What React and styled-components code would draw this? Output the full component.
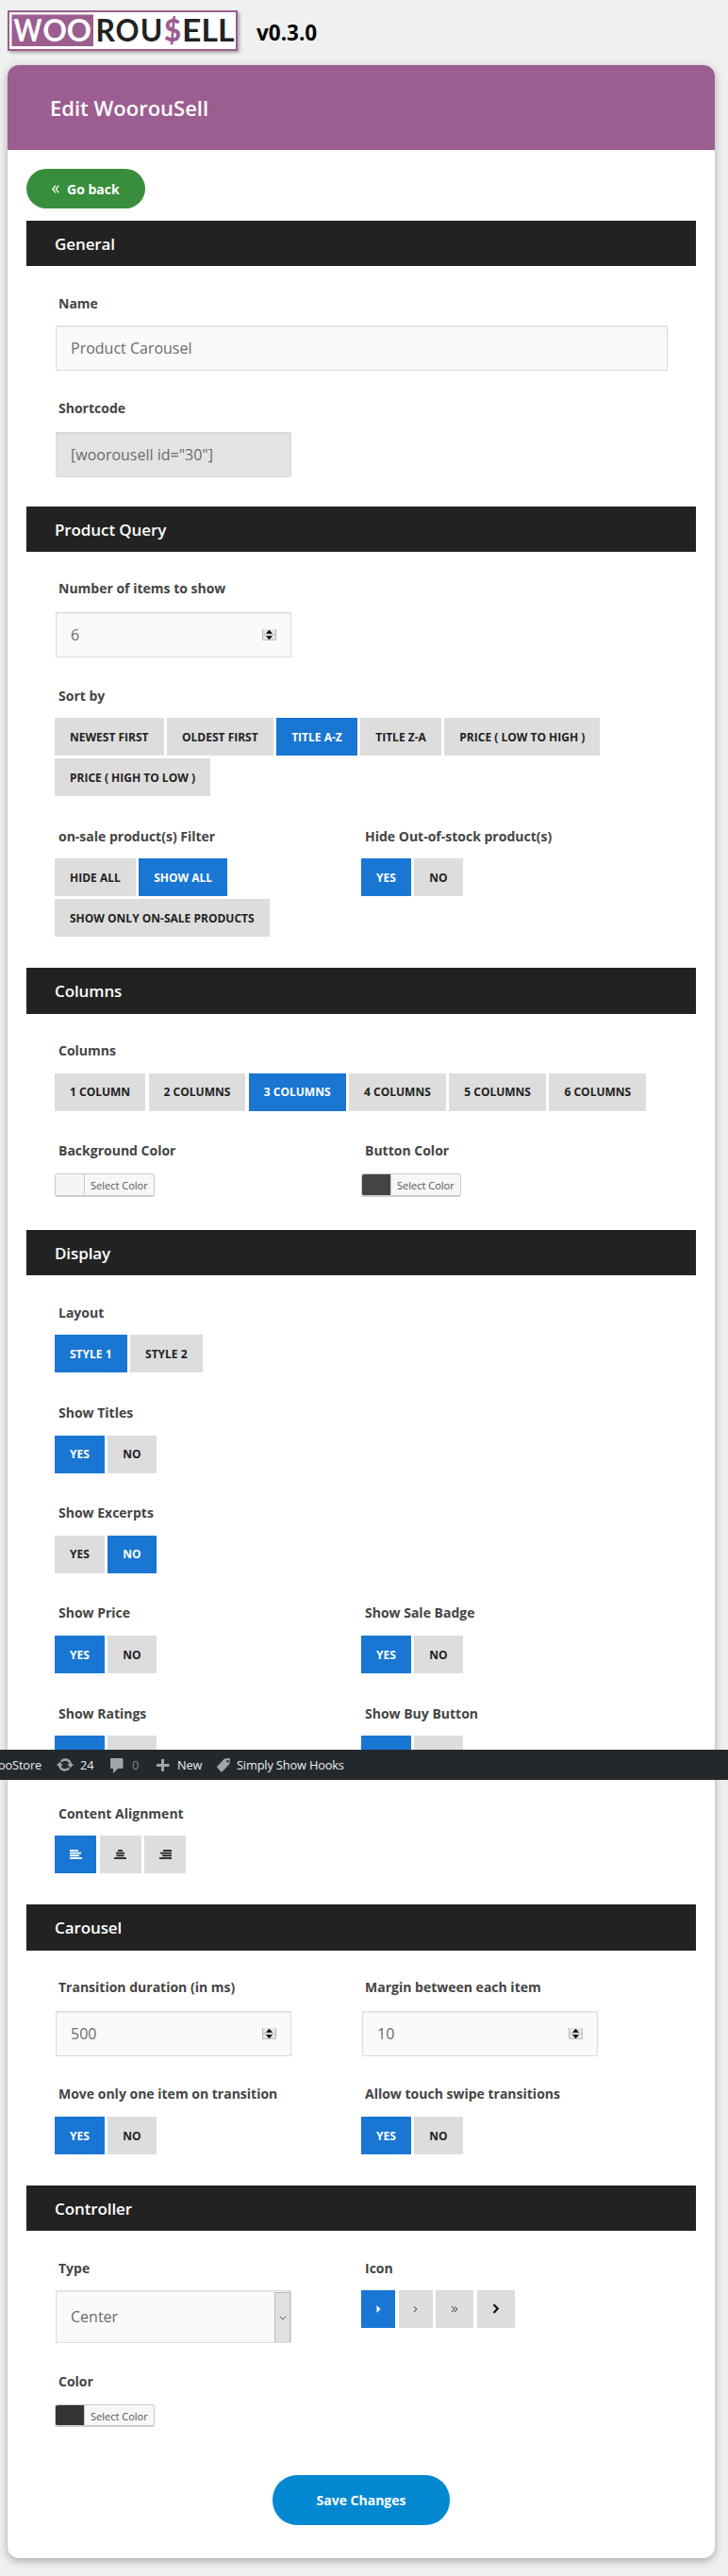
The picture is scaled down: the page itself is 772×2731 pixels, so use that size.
import React from "react";
import styled, { createGlobalStyle } from "styled-components";

const Global = createGlobalStyle`
  *, *::before, *::after { box-sizing: border-box; }
  body { margin: 0; background: #f0f0f0; font-family: "Open Sans", sans-serif; color: #444; }
`;

const Page = styled.div`
  position: relative;
  height: 2731px;
  padding: 11px 14px 0 8px;
  overflow: hidden;
`;

const Brand = styled.header`
  display: flex;
  height: 58px;
`;

const LogoBox = styled.div`
  width: 244px;
  height: 43px;
  border: 2px solid #9c5d90;
  background: #fff;
  box-shadow: 2px 2px 3px rgba(0, 0, 0, 0.3);
  svg { display: block; }
`;

const Version = styled.div`
  margin: 8px 0 0 20px;
  font-size: 22.5px;
  line-height: 32px;
  font-weight: 700;
  color: #000;
`;

const Card = styled.main`
  height: 2643px;
  border-radius: 12px;
  background: #fff;
  box-shadow: 0 3px 10px rgba(0, 0, 0, 0.3);
`;

const CardTitle = styled.h1`
  margin: 0;
  height: 90px;
  padding-left: 45px;
  border-radius: 12px 12px 0 0;
  background: #9c5d90;
  color: #fff;
  font-size: 22px;
  font-weight: 600;
  line-height: 91px;
`;

const CardBody = styled.div`
  padding: 20px 20px 0;
`;

const BackButton = styled.button`
  display: flex;
  align-items: center;
  width: 126px;
  height: 42px;
  margin: 0 0 13px;
  padding: 0 0 0 27px;
  border: 0;
  border-radius: 21px;
  background: #388e3c;
  color: #fff;
  font: 700 14px "Open Sans", sans-serif;
  svg { margin-right: 8px; }
`;

const SectionTitle = styled.h2`
  margin: 0;
  height: ${(p) => p.$h || 48}px;
  padding-left: 30px;
  background: #222;
  color: #fff;
  font-size: 17px;
  font-weight: 600;
  line-height: 50px;
  letter-spacing: -0.1px;
`;

const SectionBody = styled.div`
  padding: 0 30px ${(p) => p.$bottom}px;
`;

const Row = styled.div`
  display: grid;
  grid-template-columns: ${(p) => (p.$wide ? "1fr" : "325px 325px")};
  align-items: start;
  padding-top: ${(p) => p.$top}px;
`;

const FieldBox = styled.div`
  display: flex;
  flex-direction: column;
  align-items: flex-start;
  gap: ${(p) => p.$gap}px;
`;

const Label = styled.label`
  padding-left: 4px;
  font-size: 14px;
  font-weight: 700;
  line-height: 20px;
  color: #444;
  white-space: nowrap;
`;

const Input = styled.div`
  display: flex;
  align-items: center;
  justify-content: space-between;
  width: ${(p) => (p.$full ? 649 : 250)}px;
  height: ${(p) => p.$h || 48}px;
  margin-left: 1px;
  padding: 0 ${(p) => (p.$select ? 0 : 15)}px 0 15px;
  border: 1px solid #ddd;
  background: ${(p) => (p.$readonly ? "#e4e4e4" : "#fafafa")};
  box-shadow: inset 0 1px 2px rgba(0, 0, 0, 0.07);
  color: #6b6b6b;
  font-size: 16px;
`;

const SelectArrow = styled.span`
  display: flex;
  align-items: center;
  justify-content: center;
  align-self: stretch;
  width: 17px;
  margin-top: 1px;
  border: 1px solid #bbb;
  border-bottom: 0;
  background: #e1e1e1;
`;

const Options = styled.div`
  display: flex;
  flex-wrap: wrap;
  gap: 3px 3.5px;
  max-width: ${(p) => p.$max || 600}px;
`;

const Option = styled.button`
  display: flex;
  align-items: center;
  justify-content: center;
  height: 40px;
  min-width: ${(p) => p.$w || 0}px;
  padding: ${(p) => (p.$w ? "0" : p.$raised ? "0 16px 2px" : "0 16px")};
  border: 0;
  background: ${(p) => (p.$on ? "#1976d2" : "#ddd")};
  color: ${(p) => (p.$on ? "#fff" : "#222")};
  font: 700 12px "Open Sans", sans-serif;
  text-transform: uppercase;
  white-space: nowrap;
`;

const Picker = styled.button`
  display: flex;
  width: 106px;
  height: ${(p) => p.$h || 25}px;
  padding: 0;
  border: 1px solid #ccc;
  border-bottom-width: 2px;
  border-radius: 3px;
  overflow: hidden;
  background: #f7f7f7;
  color: #555;
  font: 11px/24px "Open Sans", sans-serif;
`;

const Swatch = styled.span`
  width: 31px;
  height: 100%;
  margin-right: 6px;
  border-right: 1px solid #ccc;
  background: ${(p) => p.$color};
`;

const SaveButton = styled.button`
  display: block;
  width: 188px;
  height: 53px;
  margin: 0 auto;
  border: 0;
  border-radius: 26px;
  background: #0288d1;
  color: #fff;
  font: 700 14px "Open Sans", sans-serif;
`;

const AdminBar = styled.nav`
  position: absolute;
  left: 0;
  top: 1855px;
  display: flex;
  align-items: center;
  width: 100%;
  height: 32px;
  background: #23282d;
  color: #eee;
  font-size: 12.8px;
  line-height: 33px;
  letter-spacing: -0.15px;
  white-space: nowrap;
`;

const SiteName = styled.span`
  display: flex;
  justify-content: flex-end;
  width: 44px;
  margin-right: 15px;
`;

const AdminItem = styled.span`
  display: flex;
  align-items: center;
  width: ${(p) => p.$w}px;
  color: ${(p) => (p.$dim ? "#84888c" : "#eee")};
  svg { flex: none; width: 20px; height: 20px; margin-right: ${(p) => p.$gap}px; fill: #a0a5aa; }
`;

/* Each glyph: text, left edge, advance width, colour */
const LOGO_LETTERS = [
  ["W", 4.5, 30, "#fff"],
  ["O", 35.2, 25.6, "#fff"],
  ["O", 60.8, 26.2, "#fff"],
  ["R", 91.5, 20.5, "#222"],
  ["O", 112.6, 25, "#222"],
  ["U", 138.7, 23.6, "#222"],
  ["E", 182.9, 20.5, "#222"],
  ["L", 203.5, 17.5, "#222"],
  ["L", 221, 17.5, "#222"],
];

const Logo = () => (
  <svg width="240" height="39" viewBox="0 0 240 39">
    <rect x="2.5" y="2.5" width="86.5" height="33.5" fill="#9c5d90" />
    <g fontFamily="Lato, sans-serif" fontWeight="700" fontSize="32">
      {LOGO_LETTERS.map(([letter, x, w, fill], i) => (
        <text key={i} x={x} y="31" fill={fill} textLength={w} lengthAdjust="spacingAndGlyphs">{letter}</text>
      ))}
      <text x="164" y="31" fill="#9c5d90" fontWeight="900" textLength="18" lengthAdjust="spacingAndGlyphs">$</text>
    </g>
  </svg>
);

const Spinner = () => (
  <svg width="15" height="13" viewBox="0 0 15 13">
    <rect width="15" height="12" fill="#e6e6e6" />
    <path d="M.5 0v12M14.5 0v12M0 6h15M0 11.5h15" stroke="#bbb" />
    <path d="M4 4.7h7L7.500.8zM4 7.300h7l-3.500 3.900z" fill="#000" />
  </svg>
);

const AlignIcon = ({ align }) => {
  const widths = [9, 12, 10, 13];
  const centered = [5, 9, 8, 13];
  return (
    <svg width="13" height="10" viewBox="0 0 13 10">
      {(align === "center" ? centered : widths).map((w, i) => {
        const x = align === "left" ? 0 : align === "right" ? 13 - w : (13 - w) / 2;
        return <rect key={i} x={x} y={i * 2.7} width={w} height="1.8" fill="currentColor" />;
      })}
    </svg>
  );
};

const Field = ({ label, gap = 13, children }) => (
  <FieldBox $gap={gap}>
    <Label>{label}</Label>
    {children}
  </FieldBox>
);

const Choice = ({ items, on, max, raised }) => (
  <Options $max={max}>
    {items.map((item, i) => (
      <Option key={item} $on={i === on} $raised={raised}>{item}</Option>
    ))}
  </Options>
);

const YesNo = ({ on = 0, raised }) => <Choice items={["Yes", "No"]} on={on} raised={raised} />;

const ColorPicker = ({ color, h }) => (
  <Picker $h={h}>
    <Swatch $color={color} />
    Select Color
  </Picker>
);

const NumberInput = ({ value }) => (
  <Input>
    {value}
    <Spinner />
  </Input>
);

export default function App() {
  return (
    <Page>
      <Global />
      <Brand>
        <LogoBox><Logo /></LogoBox>
        <Version>v0.3.0</Version>
      </Brand>
      <Card>
        <CardTitle>Edit WoorouSell</CardTitle>
        <CardBody>
          <BackButton>
            <svg width="8" height="9" viewBox="0 0 8 9" fill="none" stroke="#fff" strokeWidth="1.2">
              <path d="M4 .7.8 4.5 4 8.3M7.4.7 4.2 4.5l3.2 3.8" />
            </svg>
            Go back
          </BackButton>

          <SectionTitle>General</SectionTitle>
          <SectionBody $bottom={31}>
            <Row $top={30} $wide>
              <Field label="Name"><Input $full>Product Carousel</Input></Field>
            </Row>
            <Row $top={30}>
              <Field label="Shortcode" gap={15}><Input $readonly>[woorousell id="30"]</Input></Field>
            </Row>
          </SectionBody>

          <SectionTitle>Product Query</SectionTitle>
          <SectionBody $bottom={33}>
            <Row $top={29}>
              <Field label="Number of items to show" gap={15}><NumberInput value="6" /></Field>
            </Row>
            <Row $top={31} $wide>
              <Field label="Sort by">
                <Choice
                  on={2}
                  items={["Newest first", "Oldest first", "Title A-Z", "Title Z-A", "Price ( low to high )", "Price ( high to low )"]}
                />
              </Field>
            </Row>
            <Row $top={33}>
              <Field label="on-sale product(s) Filter">
                <Choice on={1} max={240} items={["Hide all", "Show all", "Show only on-sale products"]} />
              </Field>
              <Field label="Hide Out-of-stock product(s)"><YesNo /></Field>
            </Row>
          </SectionBody>

          <SectionTitle $h={49}>Columns</SectionTitle>
          <SectionBody $bottom={35}>
            <Row $top={29} $wide>
              <Field label="Columns" gap={14}>
                <Choice raised on={2} max={650} items={["1 Column", "2 Columns", "3 Columns", "4 Columns", "5 Columns", "6 Columns"]} />
              </Field>
            </Row>
            <Row $top={32}>
              <Field label="Background Color" gap={14}><ColorPicker color="#f5f5f5" /></Field>
              <Field label="Button Color" gap={14}><ColorPicker color="#444" /></Field>
            </Row>
          </SectionBody>

          <SectionTitle>Display</SectionTitle>
          <SectionBody $bottom={33}>
            <Row $top={30}>
              <Field label="Layout"><Choice on={0} items={["Style 1", "Style 2"]} /></Field>
            </Row>
            <Row $top={33}>
              <Field label="Show Titles" gap={14}><YesNo raised /></Field>
            </Row>
            <Row $top={32}>
              <Field label="Show Excerpts" gap={14}><YesNo on={1} raised /></Field>
            </Row>
            <Row $top={32}>
              <Field label="Show Price" gap={14}><YesNo /></Field>
              <Field label="Show Sale Badge" gap={14}><YesNo /></Field>
            </Row>
            <Row $top={33}>
              <Field label="Show Ratings"><YesNo /></Field>
              <Field label="Show Buy Button"><YesNo /></Field>
            </Row>
            <Row $top={33}>
              <Field label="Content Alignment">
                <Options>
                  <Option $w={44} $on><AlignIcon align="left" /></Option>
                  <Option $w={44}><AlignIcon align="center" /></Option>
                  <Option $w={44}><AlignIcon align="right" /></Option>
                </Options>
              </Field>
            </Row>
          </SectionBody>

          <SectionTitle $h={49}>Carousel</SectionTitle>
          <SectionBody $bottom={33}>
            <Row $top={29}>
              <Field label="Transition duration (in ms)" gap={15}><NumberInput value="500" /></Field>
              <Field label="Margin between each item" gap={15}><NumberInput value="10" /></Field>
            </Row>
            <Row $top={30}>
              <Field label="Move only one item on transition" gap={14}><YesNo /></Field>
              <Field label="Allow touch swipe transitions" gap={14}><YesNo /></Field>
            </Row>
          </SectionBody>

          <SectionTitle>Controller</SectionTitle>
          <SectionBody $bottom={51}>
            <Row $top={30}>
              <Field label="Type">
                <Input $h={56} $select>
                  Center
                  <SelectArrow>
                    <svg width="8" height="5" viewBox="0 0 8 5" fill="none" stroke="#555"><path d="m.7.7 3.3 3.3L7.3.7" /></svg>
                  </SelectArrow>
                </Input>
              </Field>
              <Field label="Icon">
                <Options>
                  <Option $w={36} $on><svg width="5" height="8" viewBox="0 0 5 8"><path d="M.5 0v8l4-4z" fill="#fff" /></svg></Option>
                  <Option $w={36}><svg width="5" height="8" viewBox="0 0 5 8" fill="none" stroke="#222"><path d="m1 1.300 2.800 2.900L1 7.100" /></svg></Option>
                  <Option $w={40}><svg width="8" height="8" viewBox="0 0 8 8" fill="none" stroke="#222"><path d="m1 1.300 2.800 2.900L1 7.100M4 1.300l2.800 2.900L4 7.100" /></svg></Option>
                  <Option $w={40}><svg width="8" height="12" viewBox="0 0 8 12" fill="none" stroke="#111" strokeWidth="2.2"><path d="m1.5 1.2 4.300 4.400-4.300 4.400" /></svg></Option>
                </Options>
              </Field>
            </Row>
            <Row $top={31}>
              <Field label="Color" gap={14}><ColorPicker color="#333" h={24} /></Field>
            </Row>
          </SectionBody>
          <SaveButton>Save Changes</SaveButton>
        </CardBody>
      </Card>

      <AdminBar>
        <SiteName>ooStore</SiteName>
        <AdminItem $w={55} $gap={6}>
          <svg viewBox="0 0 20 20">
            <path d="M10.200 3.280c3.530 0 6.430 2.610 6.920 6h2.080l-3.500 4-3.500-4h2.320a4.439 4.439 0 0 0-4.320-3.450c-1.450 0-2.730.71-3.540 1.780L4.950 5.660a6.965 6.965 0 0 1 5.250-2.380zM9.800 16.720c-3.520 0-6.430-2.610-6.920-6H.8l3.500-4 3.500 4H5.480a4.439 4.439 0 0 0 4.320 3.450c1.450 0 2.730-.71 3.540-1.780l1.710 1.950a6.950 6.950 0 0 1-5.250 2.380z" />
          </svg>
          24
        </AdminItem>
        <AdminItem $w={49} $gap={6} $dim>
          <svg viewBox="0 0 20 20"><path d="M4 3h11.500q1 0 1 1v9q0 1-1 1H11l-5 5v-5H4q-1 0-1-1V4q0-1 1-1z" /></svg>
          0
        </AdminItem>
        <AdminItem $w={65} $gap={5}>
          <svg viewBox="0 0 20 20"><path d="M16.500 9v3H11v5H8v-5H3V9h5V4h3v5z" /></svg>
          New
        </AdminItem>
        <AdminItem $w={150} $gap={3}>
          <svg viewBox="0 0 20 20">
            <path fillRule="evenodd" d="M10 3.500 15 3q1 0 1 1l-.5 5-7.500 8q-1 1-2 0l-3.500-3.800q-.7-.8 0-1.700zM14.800 6.200a1.300 1.300 0 1 0-2.600 0 1.300 1.300 0 0 0 2.600 0z" />
          </svg>
          Simply Show Hooks
        </AdminItem>
      </AdminBar>
    </Page>
  );
}
